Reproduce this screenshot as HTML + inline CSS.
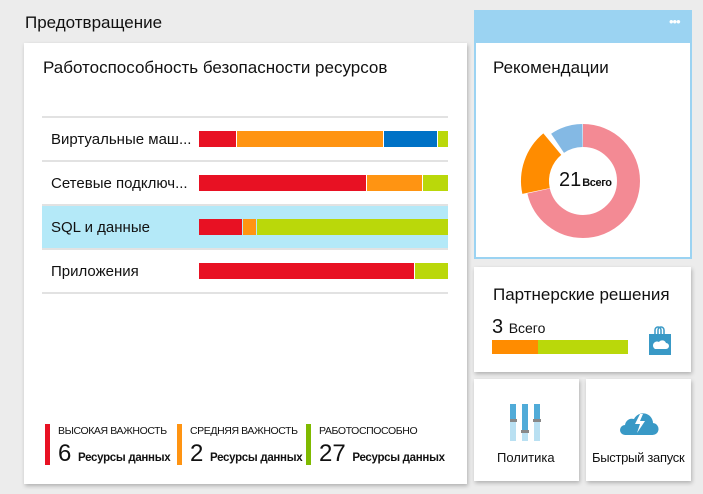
<!DOCTYPE html>
<html><head><meta charset="utf-8"><style>
*{margin:0;padding:0;box-sizing:border-box}
body{width:703px;height:494px;background:#ececec;font-family:"Liberation Sans","DejaVu Sans",sans-serif;color:#111;position:relative;overflow:hidden}
.a{position:absolute}
.card{position:absolute;background:#fff;box-shadow:1px 2px 4px rgba(0,0,0,.25)}
.line{position:absolute;left:42px;width:406px;height:2px;background:#e2e2e2}
.lbl{position:absolute;left:51px;font-size:15px}
.bar{position:absolute;height:16px;top:0}
.leg{position:absolute;top:424px;width:5px;height:41px}
.lt{position:absolute;top:425px;font-size:10.5px;letter-spacing:-.4px;white-space:nowrap}
.ln{position:absolute;top:440px;font-size:24px;line-height:28px;white-space:nowrap}
.ln b{font-size:11.5px;font-weight:bold;letter-spacing:-.3px}
</style></head><body>
<div class="a" style="left:25px;top:13px;font-size:17px">Предотвращение</div>

<div class="card" style="left:24px;top:43px;width:443px;height:441px"></div>
<div class="a" style="left:43px;top:58px;font-size:17px">Работоспособность безопасности ресурсов</div>
<div class="line" style="top:116px"></div>
<div class="line" style="top:160px"></div>
<div class="a" style="left:42px;top:205px;width:406px;height:44px;background:#b4e9f8"></div>
<div class="line" style="top:204px"></div>
<div class="line" style="top:248px"></div>
<div class="line" style="top:292px"></div>
<div class="lbl" style="top:131px">Виртуальные маш...</div>
<div class="lbl" style="top:175px">Сетевые подключ...</div>
<div class="lbl" style="top:219px">SQL и данные</div>
<div class="lbl" style="top:263px">Приложения</div>
<div class="a" style="top:131px;left:0">
<div class="bar" style="left:199px;width:37px;background:#e81123"></div>
<div class="bar" style="left:237px;width:146px;background:#ff9412"></div>
<div class="bar" style="left:384px;width:53px;background:#0072c6"></div>
<div class="bar" style="left:438px;width:10px;background:#bad80a"></div></div>
<div class="a" style="top:175px;left:0">
<div class="bar" style="left:199px;width:167px;background:#e81123"></div>
<div class="bar" style="left:367px;width:55px;background:#ff9412"></div>
<div class="bar" style="left:423px;width:25px;background:#bad80a"></div></div>
<div class="a" style="top:219px;left:0">
<div class="bar" style="left:199px;width:43px;background:#e81123"></div>
<div class="bar" style="left:243px;width:13px;background:#ff9412"></div>
<div class="bar" style="left:257px;width:191px;background:#bad80a"></div></div>
<div class="a" style="top:263px;left:0">
<div class="bar" style="left:199px;width:215px;background:#e81123"></div>
<div class="bar" style="left:415px;width:33px;background:#bad80a"></div></div>

<div class="leg" style="left:45px;background:#e81123"></div>
<div class="lt" style="left:58px">ВЫСОКАЯ ВАЖНОСТЬ</div>
<div class="ln" style="left:58px">6 <b>Ресурсы данных</b></div>
<div class="leg" style="left:177px;background:#ff9412"></div>
<div class="lt" style="left:190px">СРЕДНЯЯ ВАЖНОСТЬ</div>
<div class="ln" style="left:190px">2 <b>Ресурсы данных</b></div>
<div class="leg" style="left:306px;background:#7fba00"></div>
<div class="lt" style="left:319px">РАБОТОСПОСОБНО</div>
<div class="ln" style="left:319px">27 <b>Ресурсы данных</b></div>

<div class="a" style="left:474px;top:10px;width:218px;height:249px;background:#9bd3f2"></div>
<div class="a" style="left:669px;top:14px;color:#fff;font-size:13px;letter-spacing:-1px">•••</div>
<div class="a" style="left:476px;top:43px;width:214px;height:214px;background:#fff"></div>
<div class="a" style="left:493px;top:58px;font-size:17px">Рекомендации</div>
<svg class="a" style="left:0;top:0" width="703" height="494">
<g transform="translate(583,181) rotate(-90)">
<circle r="45.5" fill="none" stroke="#f38a94" stroke-width="23" stroke-dasharray="204 400"/>
<g transform="rotate(258)"><circle r="48" fill="none" stroke="#ff8c00" stroke-width="28" stroke-dasharray="52 400"/></g>
<g transform="rotate(326)"><circle r="45.5" fill="none" stroke="#84b9e4" stroke-width="23" stroke-dasharray="26.5 400"/></g>
</g>
</svg>
<div class="a" style="left:559px;top:169px;font-size:20px;white-space:nowrap">21<b style="font-size:11px;margin-left:1px;letter-spacing:-.4px">Всего</b></div>

<div class="card" style="left:474px;top:267px;width:217px;height:105px"></div>
<div class="a" style="left:493px;top:285px;font-size:17px">Партнерские решения</div>
<div class="a" style="left:492px;top:316px;font-size:20px">3 <span style="font-size:14px">Всего</span></div>
<div class="a" style="left:492px;top:340px;width:46px;height:14px;background:#ff8c00"></div>
<div class="a" style="left:538px;top:340px;width:90px;height:14px;background:#bad80a"></div>
<svg class="a" style="left:647px;top:326px" width="26" height="30"><path d="M8 8V4a3 3 0 0 1 6 0v4M11 8V4a3 3 0 0 1 6 0v4" fill="none" stroke="#3999c6" stroke-width="1.5"/><rect x="2" y="8" width="22" height="21" fill="#3999c6"/><path d="M8 23h11a3 3 0 0 0 0-6 4 4 0 0 0-7-1 3 3 0 0 0-4 7z" fill="#fff"/></svg>

<div class="card" style="left:474px;top:379px;width:105px;height:102px"></div>
<div class="card" style="left:586px;top:379px;width:105px;height:102px"></div>
<svg class="a" style="left:510px;top:404px" width="34" height="38">
<rect x="0" y="0" width="6" height="37" fill="#b9e0f2"/><rect x="0" y="0" width="6" height="16" fill="#50abd8"/><rect x="-1" y="15" width="8" height="3" fill="#888"/>
<rect x="12" y="0" width="6" height="37" fill="#b9e0f2"/><rect x="12" y="0" width="6" height="27" fill="#50abd8"/><rect x="11" y="26" width="8" height="3" fill="#888"/>
<rect x="24" y="0" width="6" height="37" fill="#b9e0f2"/><rect x="24" y="0" width="6" height="16" fill="#50abd8"/><rect x="23" y="15" width="8" height="3" fill="#888"/>
</svg>
<div class="a" style="left:497px;top:450px;font-size:13px">Политика</div>
<svg class="a" style="left:619px;top:408px" width="40" height="28"><path d="M6 27h27a6 6 0 0 0 1-12 10 10 0 0 0-19-4 7 7 0 0 0-9 6 5 5 0 0 0 0 10z" fill="#3999c6"/><path d="M21 6l-5 10h5l-3 9 8-12h-5l3-7z" fill="#fff"/></svg>
<div class="a" style="left:592px;top:450px;font-size:13px;letter-spacing:-.3px">Быстрый запуск</div>
</body></html>
